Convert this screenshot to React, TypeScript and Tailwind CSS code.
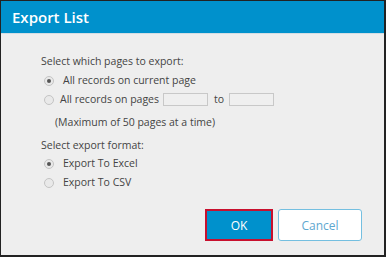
import React from 'react';

const Radio: React.FC<{ checked?: boolean }> = ({ checked }) => (
  <span className="flex h-[10px] w-[10px] shrink-0 items-center justify-center rounded-full border border-[#c4c4c4] bg-[#e9e9e9]">
    {checked && <span className="h-[4px] w-[4px] rounded-full bg-[#555]" />}
  </span>
);

const App: React.FC = () => {
  return (
    <div className="h-[257px] w-[386px] bg-white">
      <div
        className="flex h-[257px] w-[386px] flex-col border-t border-l border-r-2 border-b-2 border-[#222] bg-[#eeeeee] text-[#444]"
        style={{ fontFamily: '"Open Sans", sans-serif' }}
      >
        {/* Header */}
        <div className="flex h-[33px] items-center border-b border-[#d3dde3] bg-[#0091cc] pl-[11px]">
          <h1 className="text-[15px] font-semibold leading-none text-white">Export List</h1>
        </div>

        {/* Body */}
        <div className="flex flex-1 flex-col pl-[40px] pt-[22px] text-[10.5px] leading-[11px]">
          <p>Select which pages to export:</p>
          <label className="mt-[8px] flex items-center pl-[3px]">
            <Radio checked />
            <span className="ml-[9px]">All records on current page</span>
          </label>
          <div className="mt-[7px] flex items-center pl-[3px]">
            <Radio />
            <span className="ml-[6px]">All records on pages</span>
            <input className="ml-[4px] h-[13px] w-[45px] border border-[#c8c8c8] bg-[#efefef]" />
            <span className="ml-[6px]">to</span>
            <input className="ml-[5px] h-[13px] w-[45px] border border-[#c8c8c8] bg-[#efefef]" />
          </div>
          <p className="mt-[11px] pl-[14px]">(Maximum of 50 pages at a time)</p>

          <p className="mt-[12px]">Select export format:</p>
          <label className="mt-[7px] flex items-center pl-[3px]">
            <Radio checked />
            <span className="ml-[9px]">Export To Excel</span>
          </label>
          <label className="mt-[8px] flex items-center pl-[3px]">
            <Radio />
            <span className="ml-[9px]">Export To CSV</span>
          </label>

          <div className="mt-[21px] flex justify-end gap-[5px] pr-[22px]">
            <button className="h-[32px] w-[68px] border-2 border-[#c8102e] bg-[#0091cc] text-[12px] text-white">
              OK
            </button>
            <button className="h-[32px] w-[84px] rounded-[3px] border border-[#74bfe0] bg-white text-[12px] text-[#5ea7cf]">
              Cancel
            </button>
          </div>
        </div>
      </div>
    </div>
  );
};

export default App;
